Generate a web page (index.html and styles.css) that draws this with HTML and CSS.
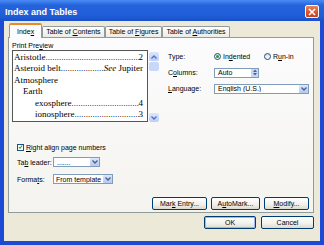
FILE: index.html
```html
<!DOCTYPE html>
<html>
<head>
  <title>Index and Tables</title>
  <link rel="stylesheet" href="styles.css">
</head>
<body>
  <div class="window">
    <div class="titlebar">
      <span class="title">Index and Tables</span>
      <span class="close">
        <svg width="8" height="8" viewBox="0 0 8 8"><path d="M1 1 L7 7 M7 1 L1 7" stroke="#fff" stroke-width="1.6"/></svg>
      </span>
    </div>

    <div class="client">
      <div class="tabs">
        <div class="tab active">Inde<u>x</u></div>
        <div class="tab">Table of <u>C</u>ontents</div>
        <div class="tab">Table of <u>F</u>igures</div>
        <div class="tab">Table of <u>A</u>uthorities</div>
      </div>

      <div class="panel">
        <div class="top">
          <div class="preview-col">
            <div class="caption">Print Pre<u>v</u>iew</div>
            <div class="preview">
              <div class="preview-box">
                <div class="entry"><span>Aristotle</span><span class="leader"></span><span>2</span></div>
                <div class="entry"><span>Asteroid belt</span><span class="leader"></span><span><i>See</i> Jupiter</span></div>
                <div class="entry">Atmosphere</div>
                <div class="entry lvl2">Earth</div>
                <div class="entry lvl3"><span>exosphere</span><span class="leader"></span><span>4</span></div>
                <div class="entry lvl3"><span>ionosphere</span><span class="leader"></span><span>3</span></div>
              </div>
              <div class="scrollbar">
                <span class="sb-btn">
                  <svg width="6" height="4" viewBox="0 0 6 4"><path d="M0.5 3.5 L3 1 L5.5 3.5" fill="none" stroke="#4d6fc4" stroke-width="1.3"/></svg>
                </span>
                <span class="sb-thumb"></span>
                <span class="sb-track"></span>
                <span class="sb-btn">
                  <svg width="6" height="4" viewBox="0 0 6 4"><path d="M0.5 0.5 L3 3 L5.5 0.5" fill="none" stroke="#4d6fc4" stroke-width="1.3"/></svg>
                </span>
              </div>
            </div>
          </div>

          <div class="options">
            <div class="opt-row">
              <span class="opt-label">Type:</span>
              <span class="radio checked"></span><span class="radio-text">In<u>d</u>ented</span>
              <span class="radio"></span><span class="radio-text">R<u>u</u>n-in</span>
            </div>
            <div class="opt-row">
              <span class="opt-label">C<u>o</u>lumns:</span>
              <span class="field spinner">
                <span class="field-text">Auto</span>
                <span class="spin">
                  <span class="spin-btn"><svg width="4" height="3" viewBox="0 0 4 3"><path d="M0 3 L2 0.5 L4 3Z" fill="#4d6185"/></svg></span>
                  <span class="spin-btn"><svg width="4" height="3" viewBox="0 0 4 3"><path d="M0 0 L2 2.5 L4 0Z" fill="#4d6185"/></svg></span>
                </span>
              </span>
            </div>
            <div class="opt-row">
              <span class="opt-label"><u>L</u>anguage:</span>
              <span class="field select lang">
                <span class="field-text">English (U.S.)</span>
                <span class="drop"><svg width="6" height="4" viewBox="0 0 6 4"><path d="M0.5 0.5 L3 3 L5.5 0.5" fill="none" stroke="#4d6185" stroke-width="1.4"/></svg></span>
              </span>
            </div>
          </div>
        </div>

        <div class="lower">
          <div class="low-row">
            <span class="checkbox">
              <svg width="6" height="6" viewBox="0 0 6 6"><path d="M1 3 L2.4 4.5 L5 1.2" fill="none" stroke="#21a121" stroke-width="1.3"/></svg>
            </span>
            <span><u>R</u>ight align page numbers</span>
          </div>
          <div class="low-row">
            <span class="low-label">Ta<u>b</u> leader:</span>
            <span class="field select leader-select">
              <span class="field-text">.......</span>
              <span class="drop"><svg width="6" height="4" viewBox="0 0 6 4"><path d="M0.5 0.5 L3 3 L5.5 0.5" fill="none" stroke="#4d6185" stroke-width="1.4"/></svg></span>
            </span>
          </div>
          <div class="low-row">
            <span class="low-label">Forma<u>t</u>s:</span>
            <span class="field select format-select">
              <span class="field-text">From template</span>
              <span class="drop"><svg width="6" height="4" viewBox="0 0 6 4"><path d="M0.5 0.5 L3 3 L5.5 0.5" fill="none" stroke="#4d6185" stroke-width="1.4"/></svg></span>
            </span>
          </div>
        </div>

        <div class="panel-buttons">
          <button class="btn mark">Mar<u>k</u> Entry...</button>
          <button class="btn automark">A<u>u</u>toMark...</button>
          <button class="btn modify"><u>M</u>odify...</button>
        </div>
      </div>

      <div class="dialog-buttons">
        <button class="btn default">OK</button>
        <button class="btn cancel">Cancel</button>
      </div>
    </div>
  </div>
</body>
</html>
```

FILE: styles.css
```css
body {
  margin: 0;
  font-family: "Liberation Sans", Arial, sans-serif;
  font-size: 7px;
  color: #000;
  background: #fff;
}

u {
  text-decoration-thickness: 1px;
  text-underline-offset: 1px;
}

.window {
  width: 324px;
  height: 245px;
  display: flex;
  flex-direction: column;
}

/* title bar */
.titlebar {
  height: 21px;
  flex: none;
  display: flex;
  align-items: center;
  padding: 0 5px;
  background: linear-gradient(#4a8cf5, #2463dc 25%, #1f5ed8 75%, #1a4fc8);
}

.title {
  flex: 1;
  color: #fff;
  font-weight: bold;
  font-size: 9px;
  padding-top: 2px;
}

.close {
  width: 14px;
  height: 13px;
  margin-top: 2px;
  box-sizing: border-box;
  border: 1px solid #fff;
  border-radius: 2px;
  background: linear-gradient(#e8845e, #d9542c 60%, #c7431f);
  display: flex;
  align-items: center;
  justify-content: center;
}

/* window body */
.client {
  flex: 1;
  box-sizing: border-box;
  background: #ece9d8;
  border: 4px solid #1d4ad4;
  border-top: 0;
  padding: 2px 6px 0 4px;
}

.tabs {
  display: flex;
  align-items: flex-end;
  height: 15px;
  margin-bottom: -1px;
  padding-left: 1px;
  position: relative;
  z-index: 1;
}

.tab {
  height: 11px;
  line-height: 10px;
  margin-bottom: 1px;
  padding: 0 3px;
  box-sizing: border-box;
  border: 1px solid #919b9c;
  border-bottom: 0;
  border-radius: 2px 2px 0 0;
  background: linear-gradient(#fff, #ecebe6);
  white-space: nowrap;
}

.tab.active {
  height: 15px;
  line-height: 13px;
  margin-bottom: 0;
  padding: 0 7px;
  border-top: 2px solid #e68b2c;
  background: #fcfcfe;
}

.panel {
  border: 1px solid #919b9c;
  background: linear-gradient(#fcfcfe, #f4f3ee);
  padding: 3px 4px 2px 3px;
}

/* preview + options */
.top {
  display: flex;
  gap: 9px;
}

.preview-col {
  width: 147px;
}

.caption {
  line-height: 9px;
}

.preview {
  display: flex;
  height: 72px;
}

.preview-box {
  flex: 1;
  border: 1px solid #555;
  background: #fff;
  padding: 0.5px 4px 0 1px;
  font-family: "Liberation Serif", "Times New Roman", serif;
  font-size: 9px;
  line-height: 11.5px;
  overflow: hidden;
}

.entry {
  display: flex;
  white-space: nowrap;
}

.entry.lvl2 {
  padding-left: 9px;
}

.entry.lvl3 {
  padding-left: 21px;
}

.leader {
  flex: 1;
  min-width: 0;
  overflow: hidden;
}

.leader::before {
  content: "...............................................................";
}

.scrollbar {
  width: 10px;
  display: flex;
  flex-direction: column;
  padding: 2px 0 0 1px;
}

.sb-btn {
  height: 9px;
  border-radius: 2px;
  background: linear-gradient(#dbe6fd, #bccff8);
  display: flex;
  align-items: center;
  justify-content: center;
}

.sb-thumb {
  height: 9px;
  margin-top: 1px;
  border-radius: 2px;
  background: #c9d8fa;
}

.sb-track {
  flex: 1;
}

.options {
  flex: 1;
  display: flex;
  flex-direction: column;
  gap: 5px;
  padding-top: 10px;
}

.opt-row {
  display: flex;
  align-items: center;
  height: 11px;
}

.opt-label {
  width: 46px;
}

.radio {
  width: 7px;
  height: 7px;
  box-sizing: border-box;
  border: 1px solid #1c5180;
  border-radius: 50%;
  background: linear-gradient(#dcdcd7, #fff);
  display: flex;
  align-items: center;
  justify-content: center;
}

.radio.checked::after {
  content: "";
  width: 3px;
  height: 3px;
  border-radius: 50%;
  background: #21a121;
}

.radio-text {
  margin-left: 2px;
  width: 41px;
}

.field {
  display: flex;
  align-items: center;
  height: 10px;
  box-sizing: border-box;
  border: 1px solid #7f9db9;
  background: #fff;
}

.field-text {
  flex: 1;
  padding-left: 3px;
  white-space: nowrap;
  overflow: hidden;
}

.spinner {
  width: 45px;
}

.spin {
  display: flex;
  flex-direction: column;
  width: 7px;
  height: 8px;
}

.spin-btn {
  flex: 1;
  display: flex;
  align-items: center;
  justify-content: center;
  background: #c8d6f8;
}

.drop {
  flex: none;
  width: 9px;
  height: 8px;
  border-radius: 1px;
  background: linear-gradient(#dbe6fd, #b3c8f5);
  display: flex;
  align-items: center;
  justify-content: center;
}

.select.lang {
  width: 95px;
}

/* lower left */
.lower {
  margin: 20px 0 0 5px;
  display: flex;
  flex-direction: column;
}

.low-row {
  display: flex;
  align-items: center;
  height: 10px;
  margin-top: 5px;
}

.low-row:first-child {
  margin-top: 0;
}

.low-row:last-child {
  margin-top: 7px;
}

.checkbox {
  width: 7px;
  height: 7px;
  box-sizing: border-box;
  border: 1px solid #1c5180;
  background: #fff;
  margin-right: 2px;
  display: flex;
  align-items: center;
  justify-content: center;
}

.low-label {
  width: 36px;
}

.leader-select {
  width: 47px;
}

.format-select {
  width: 60px;
}

.format-select .field-text {
  padding-left: 2px;
}

/* buttons */
.btn {
  font-family: "Liberation Sans", Arial, sans-serif;
  font-size: 7px;
  height: 13px;
  padding: 0;
  border: 1px solid #003c74;
  border-radius: 2px;
  background: linear-gradient(#fff, #f1f0ea 60%, #dcd9cd);
  color: #000;
}

.panel-buttons {
  display: flex;
  justify-content: flex-end;
  gap: 4px;
  margin-top: 13px;
}

.btn.mark {
  width: 55px;
}

.btn.automark {
  width: 49px;
}

.btn.modify {
  width: 45px;
}

.dialog-buttons {
  display: flex;
  justify-content: flex-end;
  gap: 5px;
  margin-top: 3px;
}

.btn.default {
  width: 52px;
  box-shadow: inset 0 0 0 1px #9cb8ef;
}

.btn.cancel {
  width: 53px;
}
```
